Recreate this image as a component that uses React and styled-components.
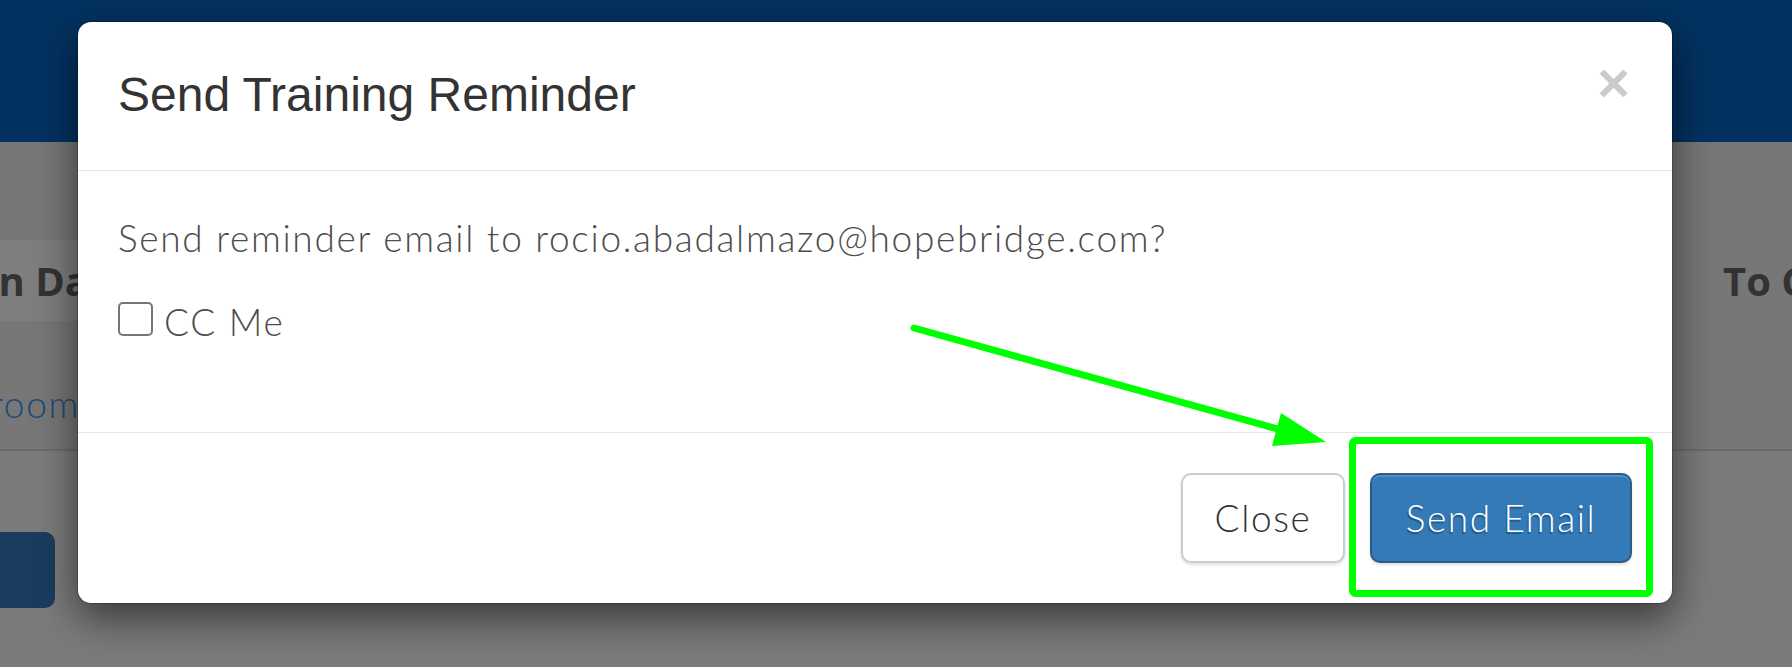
import React from "react";
import styled, { createGlobalStyle } from "styled-components";

const Global = createGlobalStyle`
  html, body { margin: 0; padding: 0; }
  body {
    width: 1792px;
    height: 667px;
    overflow: hidden;
    background: #7b7b7b;
    font-family: Lato, "Open Sans", sans-serif;
  }
`;

const Page = styled.div`
  position: relative;
  width: 1792px;
  height: 667px;
  overflow: hidden;
  background: #7b7b7b;
  display: flex;
  flex-direction: column;
`;

const TopBar = styled.header`
  flex: none;
  height: 142px;
  background: #033261;
`;

const TableArea = styled.section`
  flex: none;
  background: #777777;
  padding-top: 98px;
  border-bottom: 2px solid #6b6b6b;
`;

const HeadRow = styled.div`
  display: flex;
  justify-content: space-between;
  height: 81px;
`;

const HeadCell = styled.div`
  display: flex;
  align-items: center;
  justify-content: ${(p) => (p.$end ? "flex-end" : "flex-start")};
  width: ${(p) => p.$w}px;
  overflow: hidden;
  white-space: nowrap;
  background: ${(p) => (p.$band ? "#7e7e7e" : "transparent")};
  font: 700 40px "Open Sans", sans-serif;
  color: #333333;
`;

const BodyRow = styled.div`
  display: flex;
  height: 128px;
  box-sizing: border-box;
  padding-top: 56px;
`;

const LinkCell = styled.div`
  display: flex;
  justify-content: flex-end;
  width: 80px;
  overflow: hidden;
  white-space: nowrap;
  font: 300 37px Lato, sans-serif;
  letter-spacing: 1.7px;
  line-height: 53px;
  color: #1d4a77;
`;

const StubButton = styled.div`
  flex: none;
  margin-top: 81px;
  width: 55px;
  height: 76px;
  background: #1b3c5e;
  border-radius: 0 10px 10px 0;
`;

const ModalLayer = styled.div`
  position: absolute;
  inset: 0;
  padding: 21px 0 0 77px;
`;

const Dialog = styled.div`
  width: 1596px;
  box-sizing: border-box;
  background: #ffffff;
  background-clip: padding-box;
  border: 1px solid rgba(0, 0, 0, 0.2);
  border-radius: 14px;
  box-shadow: 0 14px 40px rgba(0, 0, 0, 0.55);
  display: flex;
  flex-direction: column;
`;

const Header = styled.div`
  display: flex;
  justify-content: space-between;
  align-items: flex-start;
  padding: 39px 42px 40px 40px;
  border-bottom: 1px solid #e5e5e5;
`;

const Title = styled.h4`
  margin: 0;
  font: 400 48px "Liberation Sans", Arial, sans-serif;
  line-height: 68.6px;
  color: #333333;
`;

const CloseX = styled.button`
  background: none;
  border: 0;
  padding: 0;
  margin-top: -6px;
  font: 700 56px "Liberation Sans", Arial, sans-serif;
  line-height: 1;
  color: #000;
  opacity: 0.2;
  cursor: pointer;
`;

const Body = styled.div`
  padding: 40px 40px 84px 40px;
  font: 300 37px Lato, sans-serif;
  letter-spacing: 1.7px;
  color: #4d4d4d;
`;

const Message = styled.p`
  margin: 0 0 31px 0;
  line-height: 53px;
`;

const CheckLabel = styled.label`
  display: flex;
  align-items: center;
  gap: 11px;
  line-height: 53px;
  cursor: pointer;
`;

const Check = styled.input`
  appearance: none;
  margin: 0 0 5px 0;
  width: 35px;
  height: 34px;
  box-sizing: border-box;
  border: 2px solid #767676;
  border-radius: 5px;
  background: #fff;
`;

const Footer = styled.div`
  display: flex;
  justify-content: flex-end;
  gap: 25px;
  padding: 40px 40px 40px 40px;
  border-top: 1px solid #e5e5e5;
`;

const Btn = styled.button`
  width: ${(p) => p.$w}px;
  height: 90px;
  box-sizing: border-box;
  padding: 0;
  border-radius: 10px;
  font: 300 37px Lato, sans-serif;
  letter-spacing: 1.6px;
  cursor: pointer;
  border: 2px solid ${(p) => (p.$primary ? "#2b5d8b" : "#cccccc")};
  background: ${(p) => (p.$primary ? "#337ab7" : "#ffffff")};
  color: ${(p) => (p.$primary ? "#ffffff" : "#333333")};
  text-shadow: ${(p) => (p.$primary ? "-1px 2px 1px rgba(0,0,0,0.3)" : "none")};
  box-shadow: inset 0 2px 0 rgba(255, 255, 255, 0.15), 0 2px 3px rgba(0, 0, 0, 0.12);
`;

const Annotation = styled.svg`
  position: absolute;
  left: 0;
  top: 0;
  width: 1792px;
  height: 667px;
  pointer-events: none;
`;

export default function App() {
  return (
    <>
      <Global />
      <Page>
        <TopBar />
        <TableArea>
          <HeadRow>
            <HeadCell $w={130} $end $band>
              Completion Date
            </HeadCell>
            <HeadCell $w={69}>To Complete</HeadCell>
          </HeadRow>
          <BodyRow>
            <LinkCell>Classroom</LinkCell>
          </BodyRow>
        </TableArea>
        <StubButton />

        <ModalLayer>
          <Dialog>
            <Header>
              <Title>Send Training Reminder</Title>
              <CloseX aria-label="Close">×</CloseX>
            </Header>
            <Body>
              <Message>Send reminder email to rocio.abadalmazo@hopebridge.com?</Message>
              <CheckLabel>
                <Check type="checkbox" />
                CC Me
              </CheckLabel>
            </Body>
            <Footer>
              <Btn $w={164}>Close</Btn>
              <Btn $w={262} $primary>
                Send Email
              </Btn>
            </Footer>
          </Dialog>
        </ModalLayer>

        <Annotation viewBox="0 0 1792 667">
          <line
            x1="914"
            y1="328"
            x2="1285"
            y2="431"
            stroke="#00ff00"
            strokeWidth="7"
            strokeLinecap="round"
          />
          <polygon points="1281,413 1272,446 1326,442" fill="#00ff00" />
          <rect
            x="1352.5"
            y="440.5"
            width="297"
            height="153"
            rx="3"
            fill="none"
            stroke="#00ff00"
            strokeWidth="7"
          />
        </Annotation>
      </Page>
    </>
  );
}
